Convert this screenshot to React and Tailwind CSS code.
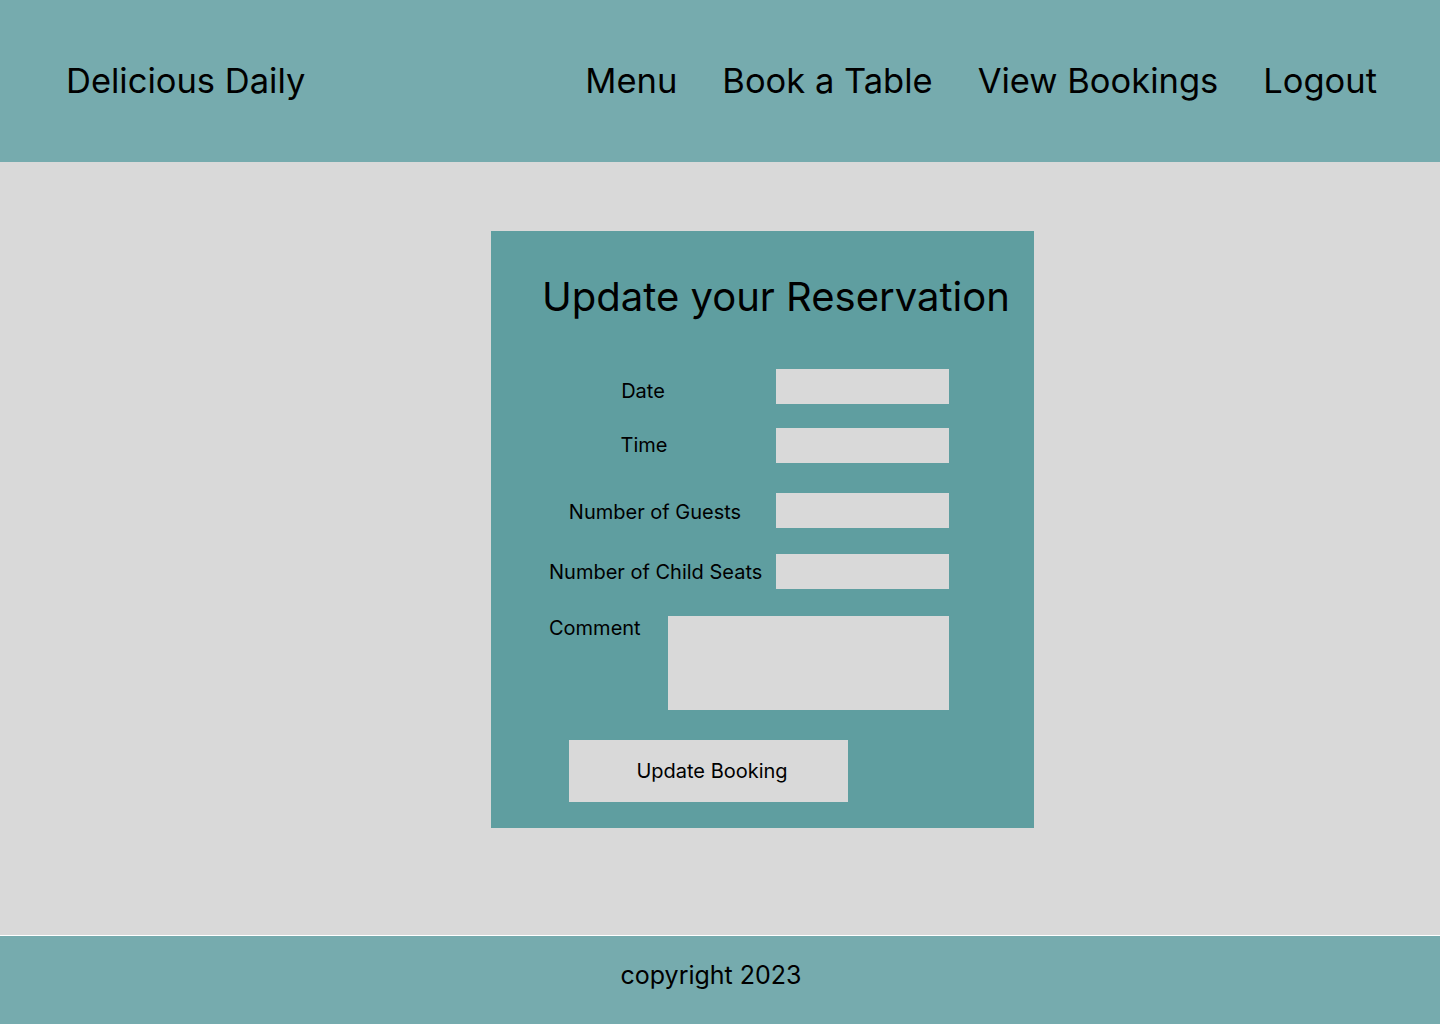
import React from 'react'

const font = { fontFamily: 'Inter, "Noto Sans", sans-serif' }

function Field({ label, labelWidth, gap, pt, mt }) {
  return (
    <div className={`flex h-[35px] items-start ${mt}`}>
      <label className={`whitespace-nowrap text-center text-[20px] leading-[28px] ${labelWidth} ${pt}`}>{label}</label>
      <input className={`h-[35px] w-[173px] bg-[#d9d9d9] outline-none ${gap}`} />
    </div>
  )
}

export default function App() {
  const links = ['Menu', 'Book a Table', 'View Bookings', 'Logout']

  return (
    <div className="flex min-h-screen flex-col bg-[#d9d9d9] text-black" style={font}>
      {/* Header */}
      <header className="flex h-[162px] items-center justify-between bg-[#76abae] pl-[66px] pr-[63px]">
        <div className="text-[34.5px] leading-[44px]">Delicious Daily</div>
        <nav className="flex gap-[45px] text-[34.5px] leading-[44px]">
          {links.map((l) => (
            <a key={l} href="#" className="text-black">
              {l}
            </a>
          ))}
        </nav>
      </header>

      {/* Main */}
      <main className="h-[773px] pt-[69px]">
        <div className="ml-[491px] h-[597px] w-[543px] bg-[#5f9ea0] pt-[42px]">
          <h1 className="pl-[51px] text-[40px] leading-[48px]">Update your Reservation</h1>

          <div className="pl-[58px]">
            <Field label="Date" labelWidth="w-[188px]" gap="ml-[39px]" pt="pt-[8px]" mt="mt-[48px]" />
            <Field label="Time" labelWidth="w-[190px]" gap="ml-[37px]" pt="pt-[3px]" mt="mt-[24px]" />
            <Field label="Number of Guests" labelWidth="w-[212px]" gap="ml-[15px]" pt="pt-[5px]" mt="mt-[30px]" />
            <Field label="Number of Child Seats" labelWidth="w-[212px]" gap="ml-[15px]" pt="pt-[4px]" mt="mt-[26px]" />

            <div className="mt-[27px] flex items-start">
              <label className="-mt-[2px] w-[119px] text-[20px] leading-[28px]">Comment</label>
              <textarea className="h-[94px] w-[281px] resize-none bg-[#d9d9d9] outline-none" />
            </div>
          </div>

          <button className="ml-[78px] mt-[30px] h-[62px] w-[279px] bg-[#d9d9d9] pl-[7px] text-[20px]">
            Update Booking
          </button>
        </div>
      </main>

      {/* Footer */}
      <footer className="flex h-[89px] items-center justify-center border-t border-white bg-[#76abae] pb-[10px] pr-[18px]">
        <p className="text-[25px] leading-[32px]">copyright 2023</p>
      </footer>
    </div>
  )
}
